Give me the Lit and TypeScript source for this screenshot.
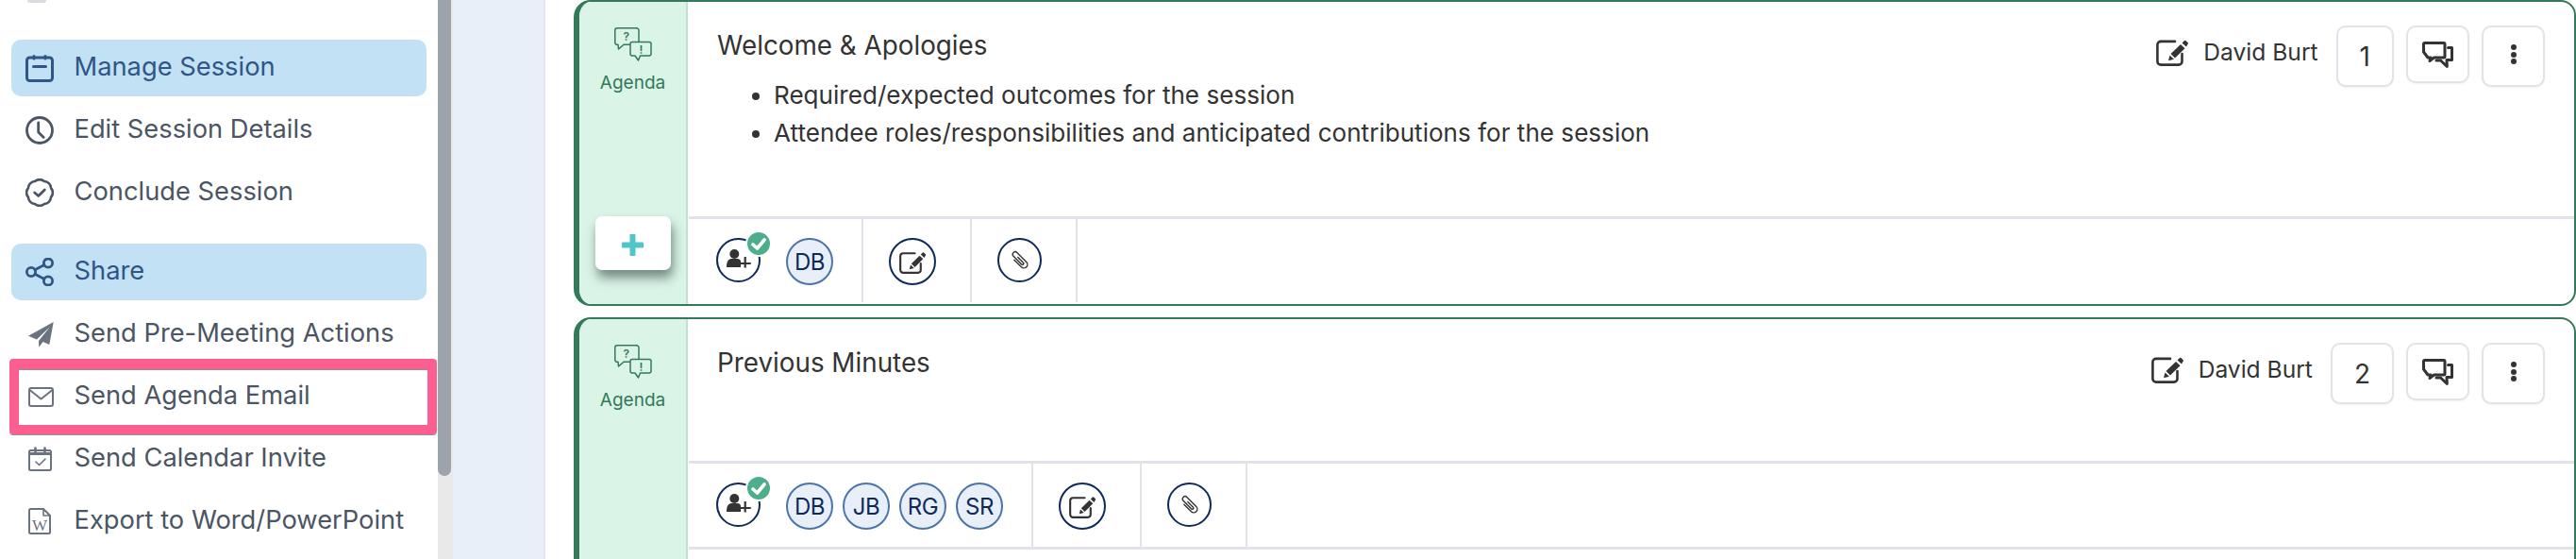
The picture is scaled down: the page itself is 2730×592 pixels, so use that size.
import { LitElement, html, css, svg } from "lit";
import { customElement } from "lit/decorators.js";

const ic = (w: number, h: number, vb: string, body: unknown, cls = "") =>
  html`<svg class=${cls} width=${w} height=${h} viewBox=${vb} preserveAspectRatio="none" fill="none" stroke="currentColor" stroke-linecap="round" stroke-linejoin="round">${body}</svg>`;

const scallop = (() => {
  let d = "";
  for (let k = 0; k < 8; k++) {
    const a = ((22.5 + 45 * k) * Math.PI) / 180;
    const x = (15 + 13 * Math.cos(a)).toFixed(2);
    const y = (15 + 13 * Math.sin(a)).toFixed(2);
    d += k === 0 ? `M${x} ${y}` : `A7.500 7.500 0 0 1 ${x} ${y}`;
  }
  const a0 = (22.5 * Math.PI) / 180;
  return `${d}A7.500 7.500 0 0 1 ${(15 + 13 * Math.cos(a0)).toFixed(2)} ${(15 + 13 * Math.sin(a0)).toFixed(2)}z`;
})();

const navIcons: Record<string, unknown> = {
  manage: ic(30, 29, "0 0 30 29", svg`<rect x="1.500" y="3" width="27" height="24.500" rx="3" stroke-width="3"/><path d="M9 1.500v2.500M21 1.500v2.500M8.500 12.500h13" stroke-width="3"/>`),
  clock: ic(30, 30, "0 0 30 30", svg`<circle cx="15" cy="15" r="13.500" stroke-width="2.800"/><path d="M13.700 7v10l5.500 5.500" stroke-width="2.800"/>`),
  badge: ic(30, 30, "0 0 30 30", svg`<path d=${scallop} stroke-width="2.600"/><path d="M9.700 15l4 3.500 6.600-6.500" stroke-width="2.800"/>`),
  share: ic(30, 30, "0 0 30 30", svg`<circle cx="6" cy="15" r="4.600" stroke-width="2.800"/><circle cx="24" cy="5.600" r="4.600" stroke-width="2.800"/><circle cx="24" cy="24.400" r="4.600" stroke-width="2.800"/><path d="M10 12.800l10-5.200M10 17.200l10 5.200" stroke-width="2.800"/>`),
  plane: ic(27, 27, "0 0 27 27", svg`<path d="M26.700 0L0 14.700 9 18.500 23 5 11 20l.3 6.700L15.500 21l6.800 3z" fill="currentColor" stroke="none"/>`),
  mail: ic(27, 21, "0 0 27 21", svg`<rect x="1" y="1" width="25" height="19" rx="2" stroke-width="2"/><path d="M1.500 3L13.500 12.500 25.500 3" stroke-width="2"/>`),
  cal: ic(25, 26, "0 0 25 26", svg`<rect x="1" y="4" width="23" height="21" rx="1.500" stroke-width="2"/><path d="M1 6h23v3H1z" fill="currentColor" stroke="none"/><path d="M7.500 1.500v4M17.500 1.500v4" stroke-width="2.600"/><path d="M8 16l3.500 3.500L18 13" stroke-width="1.600"/>`),
  word: ic(24, 28, "0 0 24 28", svg`<path d="M2.500 1H16l7 7v17.500a1.500 1.500 0 0 1-1.500 1.500h-19A1.500 1.500 0 0 1 1 25.500v-23A1.500 1.500 0 0 1 2.500 1z" stroke-width="2"/><path d="M16 1v7h7" stroke-width="1.600"/><text x="12" y="23.500" text-anchor="middle" font-family="Liberation Serif, serif" font-size="17" fill="currentColor" stroke="none">W</text>`),
};

const editIcon = (w = 35, h = 30) =>
  ic(w, h, "0 0 35 30", svg`<path d="M27.500 17v8a3.600 3.600 0 0 1-3.600 3.600H5A3.600 3.600 0 0 1 1.400 25V7.500A3.600 3.600 0 0 1 5 3.900h15" stroke-width="2.600"/><path d="M15.500 17L26 7l4.500 4.200L20 21.500z" fill="currentColor" stroke="none"/><path d="M14.500 18.500l4.500 4.200-6 1.600z" fill="currentColor" stroke="none"/><path d="M27.500 5.500L30 3a1 1 0 0 1 1.400 0l2.300 2.200a1 1 0 0 1 0 1.400L32 9.500z" fill="currentColor" stroke="none"/>`);

const chatIcon = ic(33, 28, "0 0 33 28", svg`<path d="M2.500 1.500H23a1 1 0 0 1 1 1V16a1 1 0 0 1-1 1H12.500L8 20.500 8.800 17H6L1.500 11V2.500a1 1 0 0 1 1-1z" stroke-width="3"/><path d="M27.500 6.500H31.500V19.500H26L26.300 26.500 19.500 20H15" stroke-width="3"/>`);

const agendaIcon = ic(40, 36, "0 0 40 36", svg`<path d="M3 .8h20.500a2.500 2.500 0 0 1 2.500 2.500v12.500a2.500 2.500 0 0 1-2.500 2.500H10L4.500 23l-.5-4.700H3a2.200 2.200 0 0 1-2.200-2.200V3A2.200 2.200 0 0 1 3 .8z" stroke-width="1.500"/><path d="M19 15.500h18a2 2 0 0 1 2 2V28a2 2 0 0 1-2 2H27.500L25.500 35l-3.500-5h-3a2 2 0 0 1-2-2V17.500a2 2 0 0 1 2-2z" fill="#daf4e8" stroke-width="1.500"/><text x="12.700" y="13.500" text-anchor="middle" font-family="Inter, sans-serif" font-size="12" font-weight="600" fill="currentColor" stroke="none">?</text><text x="28.500" y="27.500" text-anchor="middle" font-family="Inter, sans-serif" font-size="12" font-weight="600" fill="currentColor" stroke="none">!</text>`);

const clipIcon = ic(21, 21, "0 0 19 19", svg`<g transform="rotate(-45 9.500 9.500) translate(1.400 1.400) scale(.85)"><path d="M5.500 5V16.500a4 4 0 0 0 8 0V1.500a2.800 2.800 0 0 0-5.600 0V14.500a1.300 1.300 0 0 0 2.600 0V6" stroke-width="1.500"/></g>`);

const userPlus = ic(27, 20, "0 0 27 20", svg`<circle cx="9.300" cy="5" r="5" fill="currentColor" stroke="none"/><path d="M1 19c0-5 1-8 4.500-9h7c2 .3 3 1 3.500 2.500V19z" fill="currentColor" stroke="none"/><path d="M20.700 8v11.500M15 15h11.700" stroke-width="2.200" stroke-linecap="butt"/>`, "up");

@customElement("app-root")
export class AppRoot extends LitElement {
  static styles = css`
    :host { display: flex; width: 2730px; height: 592px; overflow: hidden; background: #fff; font-family: Inter, "Noto Sans", sans-serif; }
    .side { width: 464px; flex: none; position: relative; background: #fff; box-sizing: border-box; }
    .stub { width: 20px; height: 3px; margin-left: 29px; background: #d8dbe0; border-radius: 0 0 3px 3px; }
    .nav { display: flex; flex-direction: column; padding: 39px 12px 0 12px; }
    .item { display: flex; align-items: center; height: 60px; margin-bottom: 6px; padding-left: 15px; font-size: 27.3px; color: #4b5563; border-radius: 10px; }
    .item svg { flex: none; }
    .ico { width: 51.5px; flex: none; display: flex; align-items: center; }
    .txt { margin-top: -3px; }
    .item.on { background: #c2e1f5; color: #2f5686; }
    .item.plain { padding-left: 18px; }
    .item.plain .ico { width: 48.5px; color: #6b7280; }
    .grp { margin-top: 18px; }
    .hl { position: absolute; left: 10px; top: 380px; width: 453px; height: 80px; box-sizing: border-box; border-style: solid; border-color: #fc5e90; border-width: 11px 10px 10px 10px; border-radius: 4px; box-shadow: inset 0 1px 0 #8a8f98, 0 1px 0 #8a8f98; }
    .track { width: 16px; flex: none; background: #e9e9e9; position: relative; }
    .thumb { width: 14px; height: 504px; background: #9ca3ab; border-radius: 0 0 7px 7px; }
    .bg { width: 96px; flex: none; background: #e9eff8; border-right: 2px solid #e2e7ef; }
    .main { flex: 1; min-width: 0; padding-left: 30px; display: flex; flex-direction: column; gap: 12px; }
    .card { flex: none; display: flex; box-sizing: border-box; border: 2px solid #33795a; border-left-width: 6px; border-radius: 18px 16px 16px 18px; background: #fff; overflow: hidden; }
    .card.a { height: 324px; }
    .card.b { height: 360px; }
    .panel { width: 113px; flex: none; background: #daf4e8; border-right: 2px solid #c5dfd6; display: flex; flex-direction: column; align-items: center; color: #33795a; }
    .panel .pi { margin-top: 27px; height: 36px; }
    .panel .lab { font-size: 19px; line-height: 26px; margin-top: 10px; }
    .plus { margin-top: auto; margin-bottom: 36px; width: 80px; height: 57px; box-sizing: border-box; padding-top: 4px; border-radius: 7px; background: #fff; box-shadow: 2px 8px 12px rgba(30,50,40,.55); display: flex; align-items: center; justify-content: center; flex: none; }
    .plus svg { display: block; }
    .body { flex: 1; min-width: 0; display: flex; flex-direction: column; }
    .top { box-sizing: border-box; padding: 0 31px; display: flex; justify-content: space-between; align-items: flex-start; flex: none; }
    .a .top { height: 227px; }
    .b .top { height: 150px; }
    .title { margin-top: 26px; font-size: 27.8px; line-height: 40px; color: #333; }
    ul { margin: 13px 0 0 0; padding: 0 0 0 60px; font-size: 26.1px; line-height: 40px; color: #333; }
    .actions { display: flex; align-items: flex-start; margin-top: 25px; color: #333; }
    .who { display: flex; align-items: center; height: 56px; font-size: 24.6px; margin-right: 19px; }
    .who svg { margin-right: 15px; }
    .btn { box-sizing: border-box; height: 65px; border: 2.5px solid #e2e3ea; border-radius: 10px; display: flex; align-items: center; justify-content: center; margin-left: 13px; width: 67px; background: #fff; box-shadow: 0 1px 2px rgba(0,0,0,.06); }
    .who + .btn { margin-left: 0; }
    .num { width: auto; padding: 0 23px; font-size: 28px; }
    .chat { height: 61px; }
    .dots { display: flex; flex-direction: column; gap: 1.5px; margin-top: -4px; }
    .dots i { width: 6px; height: 6px; background: #333; border-radius: 50%; }
    .foot { flex: none; margin-left: 1px; border-top: 3px solid #e2e3ea; border-bottom: 3px solid #e2e3ea; height: 94px; box-sizing: border-box; display: flex; align-items: flex-start; }
    .a .foot { border-bottom: none; height: 90px; }
    .cell { height: 88px; box-sizing: border-box; border-right: 2px solid #e2e3ea; padding: 20px 36px 0 27px; display: flex; align-items: flex-start; color: #0d2a5b; }
    .cell.p { padding-left: 29px; padding-right: 30px; gap: 10px; }
    .circ { flex: none; box-sizing: border-box; width: 50px; height: 50px; border: 2.5px solid #0d2a5b; border-radius: 50%; display: flex; align-items: center; justify-content: center; color: #333; }
    .circ.sm { width: 47px; height: 47px; }
    .av { background: #e9eff8; border: 2.5px solid #4d74a8; color: #0d2a5b; font-size: 24px; letter-spacing: -.5px; }
    .user { position: relative; margin-right: 17px; }
    .up { margin-top: -3px; }
    .chk { position: absolute; right: -12px; top: -8px; width: 24px; height: 24px; border-radius: 50%; background: #4eae8b; box-shadow: 0 0 0 2px #fff; display: flex; align-items: center; justify-content: center; color: #fff; }
  `;

  private foot(people: string[]) {
    return html`<div class="foot">
      <div class="cell p">
        <div class="circ sm user">${userPlus}<span class="chk">${ic(16, 13, "0 0 16 13", svg`<path d="M2 7l4.500 4L14 2" stroke-width="3.600"/>`)}</span></div>
        ${people.map((p) => html`<div class="circ av">${p}</div>`)}
      </div>
      <div class="cell"><div class="circ">${editIcon(29, 25)}</div></div>
      <div class="cell"><div class="circ sm">${clipIcon}</div></div>
    </div>`;
  }

  private actions(n: string) {
    return html`<div class="actions">
      <div class="who">${editIcon()}David Burt</div>
      <div class="btn num">${n}</div>
      <div class="btn chat">${chatIcon}</div>
      <div class="btn"><div class="dots"><i></i><i></i><i></i></div></div>
    </div>`;
  }

  private panel(plus: boolean) {
    return html`<div class="panel">
      <div class="pi">${agendaIcon}</div>
      <div class="lab">Agenda</div>
      ${plus ? html`<div class="plus">${ic(23, 23, "0 0 23 23", svg`<path d="M11.500 1.500v20M1.500 11.500h20" stroke="#52c5cb" stroke-width="6"/>`)}</div>` : ""}
    </div>`;
  }

  render() {
    const item = (k: string, t: string, cls = "") =>
      html`<div class="item ${cls}"><span class="ico">${navIcons[k]}</span><span class="txt">${t}</span></div>`;
    return html`
      <div class="side">
        <div class="stub"></div>
        <div class="nav">
          ${item("manage", "Manage Session", "on")}
          ${item("clock", "Edit Session Details")}
          ${item("badge", "Conclude Session")}
          <div class="grp"></div>
          ${item("share", "Share", "on")}
          ${item("plane", "Send Pre-Meeting Actions", "plain")}
          ${item("mail", "Send Agenda Email", "plain")}
          ${item("cal", "Send Calendar Invite", "plain")}
          ${item("word", "Export to Word/PowerPoint", "plain")}
        </div>
        <div class="hl"></div>
      </div>
      <div class="track"><div class="thumb"></div></div>
      <div class="bg"></div>
      <div class="main">
        <div class="card a">
          ${this.panel(true)}
          <div class="body">
            <div class="top">
              <div>
                <div class="title">Welcome &amp; Apologies</div>
                <ul>
                  <li>Required/expected outcomes for the session</li>
                  <li>Attendee roles/responsibilities and anticipated contributions for the session</li>
                </ul>
              </div>
              ${this.actions("1")}
            </div>
            ${this.foot(["DB"])}
          </div>
        </div>
        <div class="card b">
          ${this.panel(false)}
          <div class="body">
            <div class="top">
              <div class="title">Previous Minutes</div>
              ${this.actions("2")}
            </div>
            ${this.foot(["DB", "JB", "RG", "SR"])}
          </div>
        </div>
      </div>
    `;
  }
}
